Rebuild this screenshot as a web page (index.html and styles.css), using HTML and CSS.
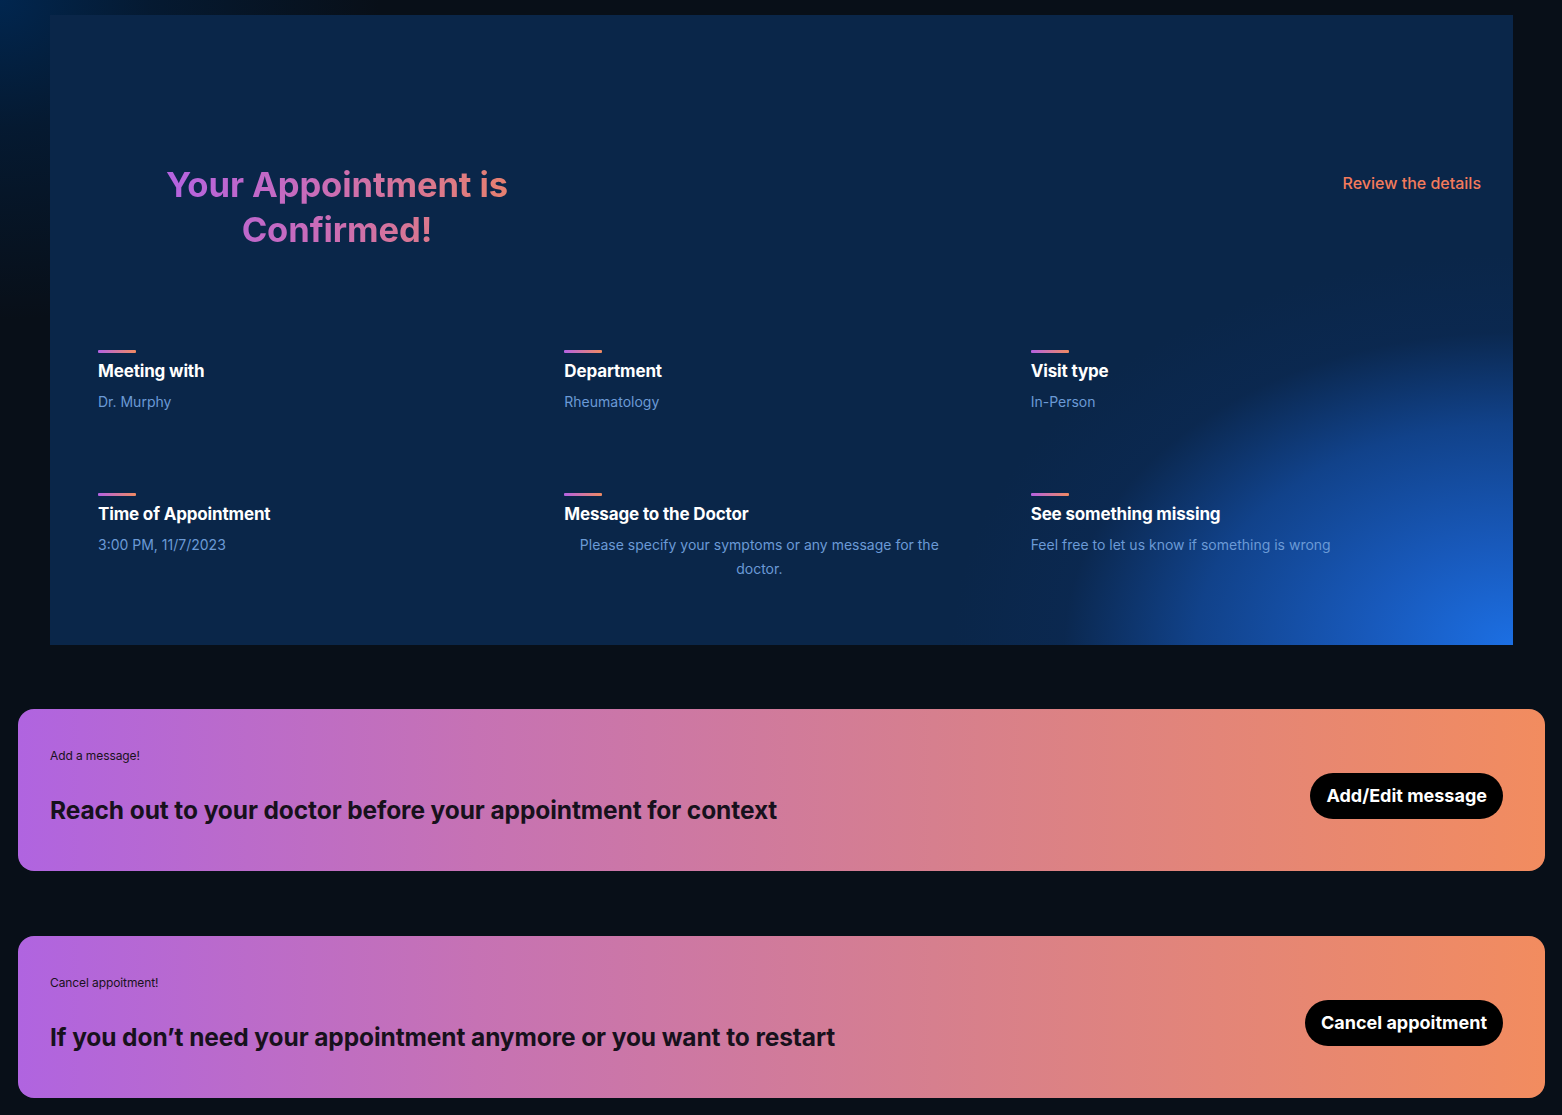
FILE: index.html
```html
<!DOCTYPE html>
<html lang="en">
<head>
<meta charset="utf-8">
<title>Appointment Confirmed</title>
<link rel="stylesheet" href="styles.css">
</head>
<body>
<main class="page">
  <section class="card">
    <div class="card-header">
      <h1 class="title"><span class="title-text">Your Appointment is<br>Confirmed!</span></h1>
      <a class="review-link" href="#">Review the details</a>
    </div>
    <div class="details">
      <div class="detail">
        <span class="bar"></span>
        <h3 class="detail-title">Meeting with</h3>
        <p class="detail-value">Dr. Murphy</p>
      </div>
      <div class="detail">
        <span class="bar"></span>
        <h3 class="detail-title">Department</h3>
        <p class="detail-value">Rheumatology</p>
      </div>
      <div class="detail">
        <span class="bar"></span>
        <h3 class="detail-title">Visit type</h3>
        <p class="detail-value">In-Person</p>
      </div>
      <div class="detail">
        <span class="bar"></span>
        <h3 class="detail-title">Time of Appointment</h3>
        <p class="detail-value">3:00 PM, 11/7/2023</p>
      </div>
      <div class="detail">
        <span class="bar"></span>
        <h3 class="detail-title">Message to the Doctor</h3>
        <p class="detail-value centered">Please specify your symptoms or any message for the doctor.</p>
      </div>
      <div class="detail">
        <span class="bar"></span>
        <h3 class="detail-title">See something missing</h3>
        <p class="detail-value">Feel free to let us know if something is wrong</p>
      </div>
    </div>
  </section>

  <section class="banner">
    <div class="banner-text">
      <p class="banner-label">Add a message!</p>
      <h2 class="banner-heading">Reach out to your doctor before your appointment for context</h2>
    </div>
    <button class="pill">Add/Edit message</button>
  </section>

  <section class="banner">
    <div class="banner-text">
      <p class="banner-label">Cancel appoitment!</p>
      <h2 class="banner-heading">If you don’t need your appointment anymore or you want to restart</h2>
    </div>
    <button class="pill">Cancel appoitment</button>
  </section>
</main>
</body>
</html>
```
FILE: styles.css
```css
* { box-sizing: border-box; }

html, body {
  margin: 0;
  padding: 0;
}

body {
  font-family: Inter, "Noto Sans", "Liberation Sans", sans-serif;
  background-color: #080f18;
  background-image: radial-gradient(ellipse 380px 320px at 0 0, #01264f 0%, rgba(2, 36, 74, 0.5) 40%, rgba(8, 15, 24, 0) 100%);
  background-repeat: no-repeat;
  min-height: 1115px;
}

.page {
  padding: 15px 17px 17px 18px;
  display: flex;
  flex-direction: column;
  gap: 64px;
}

.card {
  margin: 0 32px;
  height: 630px;
  background-color: #0a2649;
  background-image: radial-gradient(ellipse 660px 460px at 100% 100%, #1c6fe3 0%, #1859bb 22%, #11428a 48%, rgba(12, 44, 92, 0.35) 68%, rgba(10, 38, 73, 0) 85%);
  padding: 147px 48px 0 48px;
  display: flex;
  flex-direction: column;
}

.card-header {
  display: flex;
  justify-content: space-between;
  align-items: flex-start;
  margin-right: -16px;
}

.title {
  margin: 0;
  width: 478px;
  text-align: center;
  font-size: 34.6px;
  line-height: 45px;
  font-weight: 700;
  letter-spacing: -0.1px;
}

.title-text {
  display: inline-block;
  background: linear-gradient(90deg, #b463e0 0%, #c96cb8 45%, #e7806f 100%);
  -webkit-background-clip: text;
  background-clip: text;
  color: transparent;
}

.review-link {
  margin-top: 10px;
  font-size: 16px;
  line-height: 22px;
  color: #f47b5c;
  text-decoration: none;
  font-weight: 500;
}

.details {
  margin-top: 98px;
  display: grid;
  grid-template-columns: repeat(3, 1fr);
  column-gap: 32px;
  row-gap: 79px;
}

.detail {
  display: flex;
  flex-direction: column;
  align-items: flex-start;
}

.bar {
  display: block;
  width: 38px;
  height: 3px;
  border-radius: 1px;
  background: linear-gradient(90deg, #b462e2, #f08a62);
}

.detail-title {
  margin: 6px 0 0 0;
  font-size: 17px;
  line-height: 24px;
  font-weight: 700;
  letter-spacing: -0.15px;
  color: #ffffff;
}

.detail-value {
  margin: 7px 0 0 0;
  font-size: 14px;
  line-height: 24px;
  color: #6b9ad6;
}

.detail-value.centered {
  width: 390px;
  text-align: center;
}

.banner {
  height: 162px;
  border-radius: 16px;
  background: linear-gradient(90deg, #b064e0 0%, #c672b4 30%, #d67f8e 60%, #f28c5f 100%);
  padding: 0 42px 0 32px;
  display: flex;
  align-items: center;
  justify-content: space-between;
}

.banner + .banner {
  margin-top: 1px;
}

.banner-text {
  padding-bottom: 6px;
}

.banner-label {
  margin: 0;
  font-size: 12px;
  line-height: 16px;
  color: #1a1220;
  letter-spacing: -0.1px;
}

.banner-heading {
  margin: 30px 0 0 0;
  font-size: 24.5px;
  line-height: 32px;
  font-weight: 700;
  color: #17111c;
  letter-spacing: -0.1px;
}

.pill {
  border: none;
  background: #000000;
  color: #ffffff;
  font-family: inherit;
  font-size: 18px;
  font-weight: 700;
  line-height: 22px;
  height: 46px;
  padding: 0 16px;
  border-radius: 23px;
  margin-top: 12px;
}
```
